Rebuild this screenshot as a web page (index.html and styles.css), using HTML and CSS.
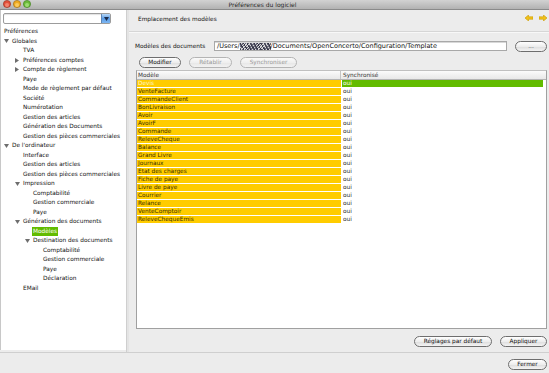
FILE: index.html
```html
<!DOCTYPE html>
<html lang="fr">
<head>
<meta charset="utf-8">
<title>Préférences du logiciel</title>
<link rel="stylesheet" href="styles.css">
</head>
<body>
<div class="window">
  <div class="titlebar">
    <div class="lights">
      <svg class="light" width="8" height="8" viewBox="0 0 8 8"><circle cx="4" cy="4" r="3.6" fill="#e2503a" stroke="#8e2a1a" stroke-width="0.6"/><circle cx="4" cy="5" r="2" fill="#f89a84" opacity="0.7"/></svg>
      <svg class="light" width="8" height="8" viewBox="0 0 8 8"><circle cx="4" cy="4" r="3.6" fill="#eeaa22" stroke="#97650a" stroke-width="0.6"/><circle cx="4" cy="5" r="2" fill="#ffd877" opacity="0.7"/></svg>
      <svg class="light" width="8" height="8" viewBox="0 0 8 8"><circle cx="4" cy="4" r="3.6" fill="#6cba3a" stroke="#3a7a18" stroke-width="0.6"/><circle cx="4" cy="5" r="2" fill="#b2e88a" opacity="0.7"/></svg>
    </div>
    <div class="title">Préférences du logiciel</div>
    <div></div>
  </div>

  <div class="main">
    <div class="sidebar">
      <div class="combo">
        <div class="combo-field"></div>
        <div class="combo-btn">
          <svg width="5" height="4" viewBox="0 0 5 4"><path d="M0 0H5L2.5 4Z" fill="#1a2a4a"/></svg>
        </div>
      </div>
      <div class="tree">
        <div class="row l0">Préférences</div>
        <div class="row l1"><span class="tog"><svg width="5" height="4" viewBox="0 0 5 4"><path d="M0 0H5L2.5 4Z"/></svg></span>Globales</div>
        <div class="row l2">TVA</div>
        <div class="row l2"><span class="tog"><svg width="4" height="5" viewBox="0 0 4 5"><path d="M0 0L4 2.5L0 5Z"/></svg></span>Préférences comptes</div>
        <div class="row l2"><span class="tog"><svg width="4" height="5" viewBox="0 0 4 5"><path d="M0 0L4 2.5L0 5Z"/></svg></span>Compte de règlement</div>
        <div class="row l2">Paye</div>
        <div class="row l2">Mode de règlement par défaut</div>
        <div class="row l2">Société</div>
        <div class="row l2">Numérotation</div>
        <div class="row l2">Gestion des articles</div>
        <div class="row l2">Génération des Documents</div>
        <div class="row l2">Gestion des pièces commerciales</div>
        <div class="row l1"><span class="tog"><svg width="5" height="4" viewBox="0 0 5 4"><path d="M0 0H5L2.5 4Z"/></svg></span>De l'ordinateur</div>
        <div class="row l2">Interface</div>
        <div class="row l2">Gestion des articles</div>
        <div class="row l2">Gestion des pièces commerciales</div>
        <div class="row l2"><span class="tog"><svg width="5" height="4" viewBox="0 0 5 4"><path d="M0 0H5L2.5 4Z"/></svg></span>Impression</div>
        <div class="row l3">Comptabilité</div>
        <div class="row l3">Gestion commerciale</div>
        <div class="row l3">Paye</div>
        <div class="row l2"><span class="tog"><svg width="5" height="4" viewBox="0 0 5 4"><path d="M0 0H5L2.5 4Z"/></svg></span>Génération des documents</div>
        <div class="row l3"><span class="sel">Modèles</span></div>
        <div class="row l3"><span class="tog"><svg width="5" height="4" viewBox="0 0 5 4"><path d="M0 0H5L2.5 4Z"/></svg></span>Destination des documents</div>
        <div class="row l4">Comptabilité</div>
        <div class="row l4">Gestion commerciale</div>
        <div class="row l4">Paye</div>
        <div class="row l4">Déclaration</div>
        <div class="row l2">EMail</div>
      </div>
    </div>

    <div class="splitter"></div>

    <div class="content">
      <div class="content-head">
        <span class="head-title">Emplacement des modèles</span>
        <div class="navs">
          <svg width="8" height="6" viewBox="0 0 8 6"><path d="M0 3L3.5 0V1.8H8V4.2H3.5V6Z" fill="#f2c21a" stroke="#c99a00" stroke-width="0.6"/></svg>
          <svg width="8" height="6" viewBox="0 0 8 6"><path d="M8 3L4.5 0V1.8H0V4.2H4.5V6Z" fill="#f2c21a" stroke="#c99a00" stroke-width="0.6"/></svg>
        </div>
      </div>

      <div class="path-row">
        <span class="path-label">Modèles des documents</span>
        <div class="field">/Users/<span class="masked"></span>/Documents/OpenConcerto/Configuration/Template</div>
        <button class="btn browse">...</button>
      </div>

      <div class="actions">
        <button class="btn w-modifier">Modifier</button>
        <button class="btn w-retablir" disabled>Rétablir</button>
        <button class="btn w-sync" disabled>Synchroniser</button>
      </div>

      <div class="table">
        <div class="thead">
          <div class="c1">Modèle</div>
          <div class="c2">Synchronisé</div>
        </div>
        <div class="tr first"><div class="c1">Devis</div><div class="c2">oui</div></div>
        <div class="tr"><div class="c1">VenteFacture</div><div class="c2">oui</div></div>
        <div class="tr"><div class="c1">CommandeClient</div><div class="c2">oui</div></div>
        <div class="tr"><div class="c1">BonLivraison</div><div class="c2">oui</div></div>
        <div class="tr"><div class="c1">Avoir</div><div class="c2">oui</div></div>
        <div class="tr"><div class="c1">AvoirF</div><div class="c2">oui</div></div>
        <div class="tr"><div class="c1">Commande</div><div class="c2">oui</div></div>
        <div class="tr"><div class="c1">ReleveCheque</div><div class="c2">oui</div></div>
        <div class="tr"><div class="c1">Balance</div><div class="c2">oui</div></div>
        <div class="tr"><div class="c1">Grand Livre</div><div class="c2">oui</div></div>
        <div class="tr"><div class="c1">Journaux</div><div class="c2">oui</div></div>
        <div class="tr"><div class="c1">Etat des charges</div><div class="c2">oui</div></div>
        <div class="tr"><div class="c1">Fiche de paye</div><div class="c2">oui</div></div>
        <div class="tr"><div class="c1">Livre de paye</div><div class="c2">oui</div></div>
        <div class="tr"><div class="c1">Courrier</div><div class="c2">oui</div></div>
        <div class="tr"><div class="c1">Relance</div><div class="c2">oui</div></div>
        <div class="tr"><div class="c1">VenteComptoir</div><div class="c2">oui</div></div>
        <div class="tr"><div class="c1">ReleveChequeEmis</div><div class="c2">oui</div></div>
      </div>

      <div class="bottom-actions">
        <button class="btn w-defaults">Réglages par défaut</button>
        <button class="btn w-apply">Appliquer</button>
      </div>
    </div>
  </div>

  <div class="footer">
    <button class="btn w-close">Fermer</button>
  </div>
</div>
</body>
</html>
```

FILE: styles.css
```css
* { box-sizing: border-box; }

html, body {
  margin: 0;
  padding: 0;
}

body {
  width: 549px;
  height: 373px;
  overflow: hidden;
  background: #ececec;
  font-family: "DejaVu Sans", "Liberation Sans", sans-serif;
  font-size: 5.8px;
  color: #111;
}

.window {
  width: 549px;
  height: 373px;
  display: flex;
  flex-direction: column;
}

/* Title bar */
.titlebar {
  height: 10px;
  flex: none;
  display: grid;
  grid-template-columns: 1fr auto 1fr;
  align-items: center;
  padding-right: 24px;
  background: linear-gradient(#d2d2d2, #b2b2b2);
  border-bottom: 1px solid #8a8a8a;
}

.lights {
  display: flex;
  gap: 2px;
  padding-left: 3px;
  align-items: flex-start;
  height: 9px;
}

.light {
  display: block;
  flex: none;
}

.title {
  font-size: 6px;
  color: #2a2a2a;
  line-height: 9px;
}

/* Main area */
.main {
  height: 342px;
  flex: none;
  display: flex;
}

.sidebar {
  width: 126px;
  flex: none;
  background: #fff;
  margin-bottom: 2px;
  border-left: 1px solid #c8c8c8;
  display: flex;
  flex-direction: column;
}

.combo {
  margin: 3px 0 0 2px;
  width: 108px;
  height: 11px;
  display: flex;
  border: 1px solid #9c9c9c;
  border-radius: 2px;
  background: #fff;
  box-shadow: inset 0 1px 1px rgba(0,0,0,0.12);
}

.combo-field { flex: 1; }

.combo-btn {
  width: 9px;
  display: flex;
  align-items: center;
  justify-content: center;
  background: linear-gradient(#b9d8f7, #5c9de6 50%, #7db6f2);
  border-left: 1px solid #5f86b5;
}

.tree {
  padding-top: 3px;
}

.row {
  height: 9.5px;
  line-height: 9.5px;
  white-space: nowrap;
  display: flex;
  align-items: center;
}

.l0 { padding-left: 3px; }
.l1 { padding-left: 11px; }
.l2 { padding-left: 22px; }
.l3 { padding-left: 32px; }
.l4 { padding-left: 42px; }

.tog {
  width: 8px;
  margin-left: -8px;
  display: flex;
  align-items: center;
}
.tog svg { fill: #6e6e6e; }

.sel {
  background: #62bb00;
  color: #fff;
  padding: 0 1px;
  margin-left: -1px;
  line-height: 8.5px;
}

.splitter {
  width: 3px;
  flex: none;
  background: #e4e4e4;
  border-left: 1px solid #cfcfcf;
}

/* Content */
.content {
  flex: 1;
  display: flex;
  flex-direction: column;
  padding-left: 7px;
  padding-right: 2px;
  padding-bottom: 5px;
}

.content-head {
  height: 22px;
  flex: none;
  display: flex;
  align-items: center;
  justify-content: space-between;
  border-bottom: 1px solid #d6d6d6;
  box-shadow: 0 1px 0 #f8f8f8;
  margin-left: -7px;
  margin-right: -2px;
  padding-left: 9px;
  padding-right: 2px;
  padding-bottom: 3px;
}

.navs {
  display: flex;
  gap: 6px;
  align-items: center;
  padding-bottom: 2px;
}

.path-row {
  margin-top: 8px;
  height: 12px;
  flex: none;
  display: flex;
  align-items: center;
}

.path-label {
  width: 79px;
  white-space: nowrap;
  margin-left: -1px;
}

.field {
  width: 293px;
  height: 10px;
  background: #fff;
  border: 1px solid #a8a8a8;
  box-shadow: inset 0 1px 0 #d8d8d8;
  padding-left: 2px;
  font-size: 6.5px;
  line-height: 8px;
  white-space: nowrap;
  overflow: hidden;
  display: flex;
  align-items: center;
}

.masked {
  display: inline-block;
  flex: none;
  width: 31px;
  height: 7px;
  background:
    repeating-linear-gradient(60deg, rgba(40,40,60,0.85) 0 1px, transparent 1px 3px),
    repeating-linear-gradient(-45deg, rgba(60,60,80,0.7) 0 1px, transparent 1px 2px),
    #d8d8d8;
}

.btn {
  font-family: "DejaVu Sans", "Liberation Sans", sans-serif;
  font-size: 5.8px;
  color: #111;
  height: 11px;
  padding: 0;
  border: 1px solid #6e6e6e;
  border-radius: 6px;
  background: linear-gradient(#ffffff, #ededed 50%, #dcdcdc 51%, #f4f4f4);
  line-height: 9px;
  text-align: center;
}

.btn:disabled {
  color: #9a9a9a;
  border-color: #b4b4b4;
  background: linear-gradient(#fafafa, #efefef 50%, #e6e6e6 51%, #f2f2f2);
}

.browse {
  margin-left: 8px;
  width: 32px;
  color: #444;
}

.actions {
  margin-top: 5px;
  height: 11px;
  flex: none;
  display: flex;
  gap: 8px;
  padding-left: 3px;
}

.w-modifier { width: 42px; }
.w-retablir { width: 43px; }
.w-sync { width: 57px; }

/* Table */
.table {
  margin-top: 2px;
  height: 259px;
  flex: none;
  background: #fff;
  border: 1px solid #a0a0a0;
  border-top-color: #c0c0c0;
}

.thead {
  height: 9px;
  display: flex;
  background: linear-gradient(#fbfbfb, #e8e8e8);
  border-bottom: 1px solid #b4b4b4;
  line-height: 8px;
  color: #333;
}

.thead .c1 {
  width: 204px;
  padding-left: 1px;
  border-right: 1px solid #c4c4c4;
}
.thead .c2 {
  flex: 1;
  padding-left: 2px;
}

.tr {
  height: 8px;
  display: flex;
  border-bottom: 1px solid #fff;
  line-height: 7px;
}

.tr .c1 {
  width: 204px;
  background: #ffcc00;
  padding-left: 1px;
  color: #3a2e00;
}

.tr .c2 {
  flex: 1;
  margin-left: 1px;
  padding-left: 1px;
  margin-right: 3px;
  color: #222;
}

.tr.first .c1 { color: #fff6c8; }
.tr.first .c2 {
  background: #62bb00;
  color: #fff;
}

.bottom-actions {
  margin-top: 7px;
  height: 11px;
  flex: none;
  display: flex;
  justify-content: flex-end;
  gap: 8px;
}

.w-defaults { width: 78px; }
.w-apply { width: 47px; }

/* Footer */
.footer {
  flex: 1;
  border-top: 1px solid #cfcfcf;
  display: flex;
  justify-content: flex-end;
  align-items: flex-start;
  padding-top: 6px;
  padding-right: 2px;
}

.w-close { width: 39px; }
```
